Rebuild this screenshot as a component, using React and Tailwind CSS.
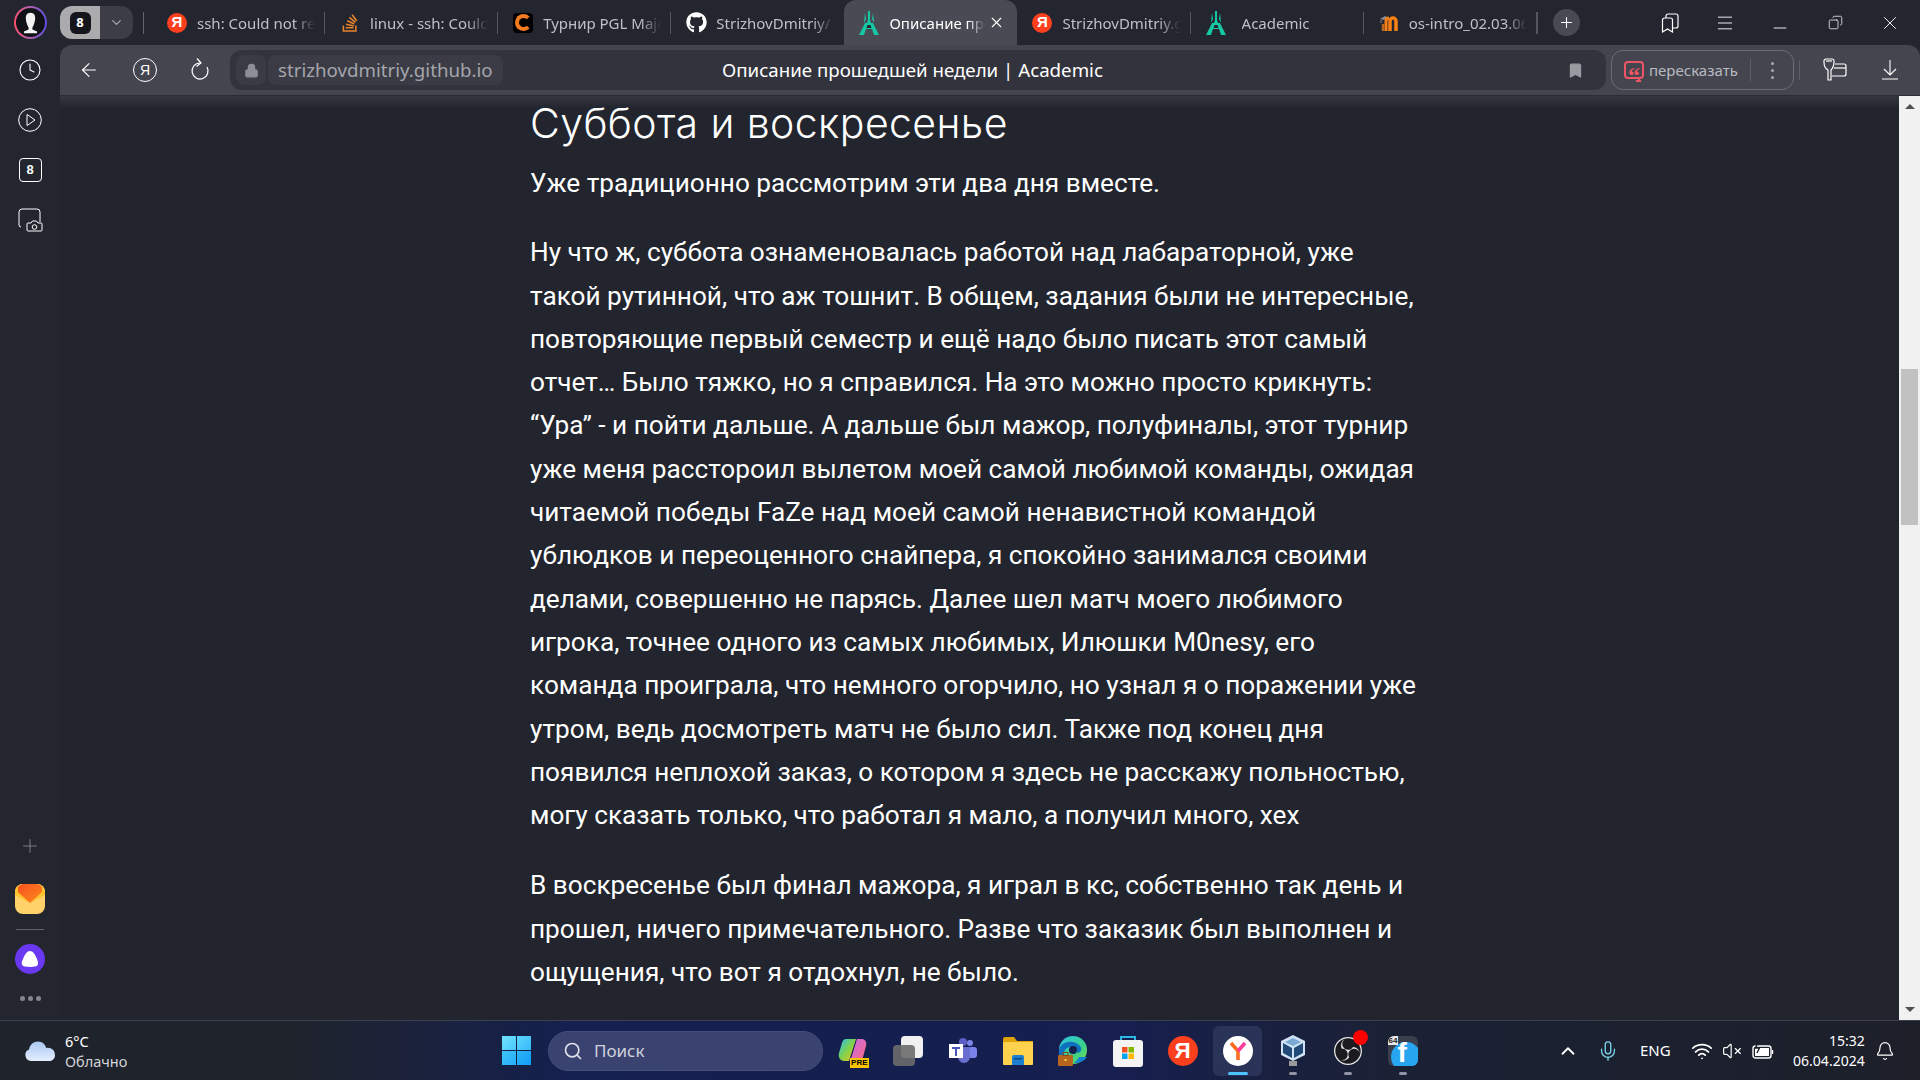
import React from "react";
import {
  ArrowLeft,
  Lock,
  Bookmark,
  X,
  Plus,
  Menu,
  Minus,
  Copy,
  ChevronDown,
  ChevronUp,
  Clock,
  Search,
  Mic,
  Wifi,
  VolumeX,
  Bell,
} from "lucide-react";
import { FaGithub, FaStackOverflow } from "react-icons/fa";
import { SiObsstudio } from "react-icons/si";

const ui = "font-['Noto_Sans',sans-serif]";

const YaLogo = ({ size = 20 }) => (
  <div
    className="flex items-center justify-center rounded-full bg-[#fc3f1d] text-white font-bold font-['Liberation_Sans',sans-serif] shrink-0"
    style={{ width: size, height: size, fontSize: size * 0.75 }}
  >
    Я
  </div>
);

const AcademicLogo = () => (
  <svg width="20" height="24" viewBox="0 0 20 24" className="shrink-0">
    <path
      d="M9 0h2v9l1 3h2l6 12h-5l-2-6H7l-2 6H0l6-12h2l1-3z"
      fill="#14c8a3"
    />
    <path d="M6 2 7 8 5 12zM14 2l-1 6 2 4z" fill="#14c8a3" />
    <path d="M8.5 14h3l1 3h-5z" fill="#23252f" />
  </svg>
);

const CLogo = () => (
  <div className="w-5 h-5 bg-black rounded-sm flex items-center justify-center shrink-0">
    <div className="w-[17px] h-[17px] rounded-full border-[4px] border-[#f57c1f] border-r-transparent" />
  </div>
);

const MoodleLogo = () => (
  <svg width="20" height="18" viewBox="0 0 20 18" fill="none" className="shrink-0">
    <path d="M1 5 6 2l4 2-5 2z" fill="#8a8a8a" />
    <path d="M2 6v3" stroke="#8a8a8a" strokeWidth="1" />
    <path d="M7 17V7a3 3 0 0 1 3-3" stroke="#f98012" strokeWidth="3" />
    <path d="M11 17V7a3 3 0 0 1 6 0v10" stroke="#f98012" strokeWidth="3.500" />
    <path d="M4 17v-7" stroke="#b8691f" strokeWidth="2.500" />
  </svg>
);

const tabs = [
  { icon: <YaLogo />, label: "ssh: Could not resolve" },
  { icon: <FaStackOverflow size={20} className="text-[#e8842c]" />, label: "linux - ssh: Could not" },
  { icon: <CLogo />, label: "Турнир PGL Major" },
  { icon: <FaGithub size={21} className="text-white" />, label: "StrizhovDmitriy/" },
  { icon: <AcademicLogo />, label: "Описание прошедшей", active: true },
  { icon: <YaLogo />, label: "StrizhovDmitriy.github" },
  { icon: <AcademicLogo />, label: "Academic", extra: true },
  { icon: <MoodleLogo />, label: "os-intro_02.03.06" },
];

const Tab = ({ tab, last }) => (
  <div
    className={`relative flex items-center h-[45px] w-[173.1px] shrink-0 ${
      tab.active ? "bg-[#494a54] rounded-t-xl text-white" : "text-[#bfc0c6]"
    }`}
  >
    <div className="w-[45px] flex justify-center shrink-0 pl-[5px]">{tab.icon}</div>
    <span
      className={`text-[15px] pt-[1px] whitespace-nowrap overflow-hidden [mask-image:linear-gradient(to_right,black_82%,transparent)] ${
        tab.active ? "w-[96px]" : "w-[118px]"
      } ${tab.extra ? "ml-[6px]" : ""}`}
    >
      {tab.label}
    </span>
    {tab.active && <X size={17} strokeWidth={1.5} className="ml-[3px] text-white" />}
    {!tab.active && !last && (
      <div className="absolute right-0 top-[12px] h-[22px] w-px bg-[#55565f]" />
    )}
  </div>
);

const Profile = () => (
  <div className="w-[33px] h-[33px] rounded-full p-[2px] bg-gradient-to-r from-[#ff4d6d] to-[#5a4de0] shrink-0">
    <div className="w-full h-full rounded-full bg-[#111218] flex items-center justify-center">
      <svg width="15" height="24" viewBox="0 0 16 24">
        <path d="M8 1c4 0 5 3 5 6 0 4-2 8-3 10v2l5 2v2H1v-2l5-2v-2C5 15 3 11 3 7c0-3 1-6 5-6z" fill="#f2f2f2" />
      </svg>
    </div>
  </div>
);

const TitleBar = () => (
  <header className={`flex items-center h-[45px] bg-[#23252f] ${ui}`}>
    <div className="w-[60px] flex justify-center shrink-0 pl-[1px]">
      <Profile />
    </div>
    <div className="flex h-[33px] w-[73px] rounded-xl overflow-hidden shrink-0">
      <div className="w-[40px] bg-[#ababad] flex items-center justify-center">
        <div className="w-[21px] h-[22px] bg-[#15161b] rounded-md flex items-center justify-center text-white text-[13px] font-bold">
          8
        </div>
      </div>
      <div className="flex-1 bg-[#3c3d47] flex items-center justify-center">
        <ChevronDown size={15} className="text-[#a6a7ad]" />
      </div>
    </div>
    <div className="w-px h-[22px] bg-[#62636b] ml-[10px] mr-[8px]" />
    <div className="flex h-full">
      {tabs.map((tab, i) => (
        <Tab key={i} tab={tab} last={tabs[i + 1]?.active} />
      ))}
    </div>
    <div className="w-px h-[22px] bg-[#55565f]" />
    <div className="ml-[15px] w-[27px] h-[27px] rounded-full bg-[#494a54] flex items-center justify-center shrink-0">
      <Plus size={17} strokeWidth={1.5} className="text-white" />
    </div>
    <div className="ml-[80px] w-[20px] flex justify-center">
      <svg width="18" height="20" viewBox="0 0 18 20" fill="none" stroke="white" strokeWidth="1.2">
        <path d="M1.5 19V7a2 2 0 0 1 2-2h6a2 2 0 0 1 2 2v12l-5-3z" />
        <path d="M5 5V3a2 2 0 0 1 2-2h8a2 2 0 0 1 2 2v10a2 2 0 0 1-2 2h-3.5" />
      </svg>
    </div>
    <Menu size={20} strokeWidth={1.1} className="ml-[35px] text-white" />
    <Minus size={20} strokeWidth={1.1} className="ml-[35px] mt-[11px] text-white" />
    <Copy size={15} strokeWidth={1.2} className="ml-[38px] text-white -scale-x-100" />
    <X size={22} strokeWidth={1} className="ml-[36px] text-white" />
  </header>
);

const KeyIcon = () => (
  <svg width="24" height="24" viewBox="0 0 24 24" fill="none" stroke="white" strokeWidth="1.2">
    <path d="M1 3a2 2 0 0 1 2-2h6a2 2 0 0 1 2 2v1c0 4-2 7-3 8v10H5V12C3 11 1 8 1 4z" />
    <path d="M3 3h6" />
    <path d="M12 6h9a2 2 0 0 1 2 2v8a2 2 0 0 1-2 2h-12" />
    <path d="M11 10h12" />
  </svg>
);

const SummaryIcon = () => (
  <div className="relative w-[20px] h-[18px] rounded-[4px] border-2 border-[#ee5566] flex items-center justify-center shrink-0 overflow-visible">
    <span className="text-[#ee5566] text-[24px] font-bold leading-none font-['Liberation_Serif',serif] mt-[9px]">“</span>
    <div className="absolute -bottom-[5px] left-[9px] w-[5px] h-[5px] border-b-2 border-r-2 border-[#ee5566] skew-x-[30deg]" />
  </div>
);

const ReloadIcon = () => (
  <svg width="20" height="24" viewBox="0 0 20 24" fill="none" stroke="white" strokeWidth="1.2" className="ml-[33px]">
    <path d="M10 5a8 8 0 1 0 7 4" />
    <path d="M7 0.500 11 5 6.500 8.500" />
  </svg>
);

const DownloadIcon = () => (
  <svg width="16" height="20" viewBox="0 0 16 20" fill="none" stroke="white" strokeWidth="1.1" className="ml-[35px]">
    <path d="M8 0v15M2 9l6 6 6-6M0 19h16" />
  </svg>
);

const Toolbar = () => (
  <div className={`h-[50px] flex items-center bg-[#44454f] rounded-tl-xl rounded-tr-xl shrink-0 ${ui}`}>
    <ArrowLeft size={22} strokeWidth={1.2} className="ml-[18px] text-white" />
    <div className="ml-[33px] w-[24px] h-[24px] rounded-full border border-white flex items-center justify-center text-white text-[14px] font-['Liberation_Sans',sans-serif]">
      Я
    </div>
    <ReloadIcon />
    <div className="ml-[20px] w-[1376px] h-[40px] rounded-xl bg-[#32333d] flex items-center px-[6px]">
      <div className="w-[30px] h-[30px] flex items-center justify-center rounded-lg bg-[#3a3b45]">
        <Lock size={15} className="text-[#8e8f96]" fill="#8e8f96" />
      </div>
      <div className="ml-[2px] w-[235px] h-[30px] rounded-lg bg-[#3a3b45] px-[10px] flex items-center text-[18.7px] text-[#a5a6ac] whitespace-nowrap">
        strizhovdmitriy.github.io
      </div>
      <div className="ml-[219px] text-[18.7px] text-white whitespace-nowrap">
        Описание прошедшей недели | Academic
      </div>
      <Bookmark size={17} className="ml-auto mr-[16px] text-[#9a9ba1]" fill="#9a9ba1" />
    </div>
    <div className="ml-[5px] w-[183px] h-[40px] rounded-xl border border-[#6b6c75] flex items-center pl-[12px]">
      <SummaryIcon />
      <span className="ml-[5px] text-[15px] text-[#b9bac0]">пересказать</span>
      <div className="ml-[12px] w-px h-[22px] bg-[#5c5d66]" />
      <div className="ml-[20px] flex flex-col gap-[4px]">
        <span className="w-[3px] h-[3px] rounded-full bg-[#a9aab0]" />
        <span className="w-[3px] h-[3px] rounded-full bg-[#a9aab0]" />
        <span className="w-[3px] h-[3px] rounded-full bg-[#a9aab0]" />
      </div>
    </div>
    <div className="ml-[5px] w-px h-[20px] bg-[#5c5d66]" />
    <div className="ml-[23px]">
      <KeyIcon />
    </div>
    <DownloadIcon />
  </div>
);

const Sidebar = () => (
  <aside className="w-[60px] shrink-0 flex flex-col items-center bg-[#23252f] pt-[13px] pb-[19px]">
    <div className="w-[60px] flex flex-col items-center gap-[26px]">
      <Clock size={24} strokeWidth={1.1} className="text-white" />
      <svg width="24" height="24" viewBox="0 0 24 24" fill="none" stroke="white" strokeWidth="1">
        <circle cx="12" cy="12" r="11.3" />
        <path d="M9 6.5 17 12 9 17.5z" />
      </svg>
      <div className="w-[23px] h-[24px] rounded-[4px] border border-white flex items-center justify-center text-white text-[13px] font-bold font-['Liberation_Sans',sans-serif]">
        8
      </div>
      <svg width="25" height="24" viewBox="0 0 25 24" fill="none" stroke="white" strokeWidth="1">
        <path d="M3 19a2 2 0 0 1-2-2V4a3 3 0 0 1 3-3h15a3 3 0 0 1 3 3v10" />
        <path d="M10 15h3l1.5-2h4l1.5 2h3a1 1 0 0 1 1 1v6a1 1 0 0 1-1 1H10a1 1 0 0 1-1-1v-6a1 1 0 0 1 1-1z" />
        <circle cx="16.5" cy="19" r="2.3" />
      </svg>
    </div>
    <Plus size={22} strokeWidth={0.9} className="mt-auto text-[#8f9097]" />
    <svg width="30" height="30" viewBox="0 0 30 30" className="mt-[27px]">
      <defs>
        <linearGradient id="mailTop" x1="0" y1="0" x2="1" y2="1">
          <stop offset="0" stopColor="#f7521f" />
          <stop offset="1" stopColor="#ff8a1c" />
        </linearGradient>
      </defs>
      <rect width="30" height="30" rx="8" fill="#ffd36a" />
      <path d="M0 8a8 8 0 0 1 8-8h14a8 8 0 0 1 8 8v3L15 19 0 11z" fill="#ffc531" />
      <path d="M3 3a8 8 0 0 1 5-3h14a8 8 0 0 1 5 3v5l-12 11L3 8z" fill="url(#mailTop)" />
    </svg>
    <div className="mt-[15px] w-[28px] h-px bg-[#62636b]" />
    <div className="mt-[14px] w-[30px] h-[30px] rounded-full bg-[#6a38f0] flex items-center justify-center">
      <svg width="18" height="16" viewBox="0 0 18 16">
        <path d="M9 0c3 0 5 3 7 8 2 5 1 7-2 7.500-3 .5-7 .5-10 0C1 15-.5 13 2 8 4 3 6 0 9 0z" fill="white" />
      </svg>
    </div>
    <div className="mt-[22px] flex gap-[3px]">
      <span className="w-[5px] h-[5px] rounded-full bg-[#85868d]" />
      <span className="w-[5px] h-[5px] rounded-full bg-[#85868d]" />
      <span className="w-[5px] h-[5px] rounded-full bg-[#85868d]" />
    </div>
  </aside>
);

const Article = () => (
  <article className="w-[920px] ml-[470px] text-white font-['Roboto',sans-serif] text-[26.2px] leading-[43.3px]">
    <h2 className="text-[41px] leading-[46px] font-light font-['Inter',sans-serif] tracking-[0.4px] mt-[4px] mb-[16px]">
      Суббота и воскресенье
    </h2>
    <p className="mb-[26px]">Уже традиционно рассмотрим эти два дня вместе.</p>
    <p className="mb-[27px]">
      Ну что ж, суббота ознаменовалась работой над лабараторной, уже
      <br />
      такой рутинной, что аж тошнит. В общем, задания были не интересные,
      <br />
      повторяющие первый семестр и ещё надо было писать этот самый
      <br />
      отчет… Было тяжко, но я справился. На это можно просто крикнуть:
      <br />
      “Ура” - и пойти дальше. А дальше был мажор, полуфиналы, этот турнир
      <br />
      уже меня расстороил вылетом моей самой любимой команды, ожидая
      <br />
      читаемой победы FaZe над моей самой ненавистной командой
      <br />
      ублюдков и переоценного снайпера, я спокойно занимался своими
      <br />
      делами, совершенно не парясь. Далее шел матч моего любимого
      <br />
      игрока, точнее одного из самых любимых, Илюшки M0nesy, его
      <br />
      команда проиграла, что немного огорчило, но узнал я о поражении уже
      <br />
      утром, ведь досмотреть матч не было сил. Также под конец дня
      <br />
      появился неплохой заказ, о котором я здесь не расскажу польностью,
      <br />
      могу сказать только, что работал я мало, а получил много, хех
    </p>
    <p>
      В воскресенье был финал мажора, я играл в кс, собственно так день и
      <br />
      прошел, ничего примечательного. Разве что заказик был выполнен и
      <br />
      ощущения, что вот я отдохнул, не было.
    </p>
  </article>
);

const Scrollbar = () => (
  <div className="relative w-[21px] h-full bg-[#f1f1f1] shrink-0 flex flex-col items-center justify-between py-[8px]">
    <div className="w-0 h-0 border-x-[5px] border-x-transparent border-b-[5px] border-b-[#505050]" />
    <div className="absolute left-[2px] top-[273px] w-[17px] h-[156px] bg-[#c1c1c1]" />
    <div className="w-0 h-0 border-x-[5px] border-x-transparent border-t-[5px] border-t-[#505050]" />
  </div>
);

const Copilot = () => (
  <div className="relative w-[30px] h-[30px]">
    <svg width="30" height="30" viewBox="0 0 30 30">
      <defs>
        <linearGradient id="copA" x1="0" y1="0" x2="1" y2="1">
          <stop offset="0" stopColor="#2bc2f3" />
          <stop offset="0.5" stopColor="#7fd24a" />
          <stop offset="1" stopColor="#f7c125" />
        </linearGradient>
        <linearGradient id="copB" x1="0" y1="0" x2="1" y2="1">
          <stop offset="0" stopColor="#c36bf0" />
          <stop offset="1" stopColor="#ff6a7a" />
        </linearGradient>
      </defs>
      <path d="M8 3h10L11 25H6C2 25 0 21 1 17L4 7c1-3 2-4 4-4z" fill="url(#copA)" />
      <path d="M19 3h5c3 0 5 3 4 7l-3 11c-1 3-3 5-6 5h-7z" fill="url(#copB)" />
    </svg>
    <div className="absolute right-[-1px] bottom-[-2px] bg-[#f8c400] text-black text-[8px] leading-[10px] font-bold px-[1px] font-['Liberation_Sans',sans-serif]">
      PRE
    </div>
  </div>
);

const TaskIcon = ({ children, dot, active }) => (
  <div className={`relative w-[49px] h-[50px] mx-[3px] rounded-md flex items-center justify-center ${active ? "bg-[#2a3358]" : ""}`}>
    {children}
    {dot && (
      <div
        className={`absolute bottom-[1px] left-1/2 -translate-x-1/2 h-[3px] rounded-full ${
          active ? "w-[20px] bg-[#4cc2ff]" : "w-[8px] bg-[#8f93a3]"
        }`}
      />
    )}
  </div>
);

const TaskbarIcons = () => (
  <div className="flex items-center ml-[2px]">
    <TaskIcon><Copilot /></TaskIcon>
    <TaskIcon>
      <div className="relative w-[30px] h-[30px]">
        <div className="absolute right-0 top-0 w-[22px] h-[22px] rounded-sm bg-[#f1f1f1]" />
        <div className="absolute left-0 bottom-0 w-[22px] h-[21px] rounded-sm bg-[#6b6b6b]/90" />
      </div>
    </TaskIcon>
    <TaskIcon>
      <svg width="28" height="26" viewBox="0 0 28 26">
        <circle cx="21" cy="5" r="3" fill="#7b83eb" />
        <circle cx="14" cy="4" r="4" fill="#5b5fc7" />
        <rect x="19" y="9" width="9" height="11" rx="3" fill="#7b83eb" />
        <path d="M8 9h13v10a6 6 0 0 1-12 0z" fill="#6a6ed0" />
        <rect x="0" y="6" width="14" height="14" fill="#fff" />
        <path d="M3 9h8v2H8v7H6v-7H3z" fill="#4b53bc" />
      </svg>
    </TaskIcon>
    <TaskIcon>
      <svg width="30" height="28" viewBox="0 0 30 28">
        <path d="M0 2a2 2 0 0 1 2-2h9l3 4h16v6H0z" fill="#e0a40a" />
        <rect y="5" width="30" height="23" rx="1" fill="#ffd24d" />
        <path d="M9 20a2 2 0 0 1 2-2h8a2 2 0 0 1 2 2v8H9z" fill="#1e7fd0" />
        <rect x="11" y="21" width="8" height="1.500" fill="#0c4a84" />
      </svg>
    </TaskIcon>
    <TaskIcon>
      <svg width="30" height="30" viewBox="0 0 30 30">
        <defs>
          <linearGradient id="edgeA" x1="0" y1="0" x2="1" y2="1">
            <stop offset="0" stopColor="#2ec4e6" />
            <stop offset="0.6" stopColor="#39d08a" />
            <stop offset="1" stopColor="#7fe04a" />
          </linearGradient>
        </defs>
        <circle cx="15" cy="14" r="14" fill="url(#edgeA)" />
        <path d="M1 14C3 5 16 3 22 10c3 4 0 7-3 7 2-6-8-9-12-3-2 4-1 9 3 12-6-1-10-6-9-12z" fill="#0f6fc0" />
        <circle cx="15" cy="14" r="4" fill="#16204e" />
        <path d="M16 27c6 0 10-2 13-6l-8 0c-2 3-3 4-5 6z" fill="#1382d0" />
        <rect x="0" y="19" width="15" height="11" rx="1" fill="#b5651d" />
        <rect x="5" y="16.500" width="5" height="3" fill="none" stroke="#8a4a12" />
        <rect x="6.500" y="23" width="2" height="2" fill="#ffd24d" />
      </svg>
    </TaskIcon>
    <TaskIcon>
      <svg width="30" height="32" viewBox="0 0 30 32">
        <path d="M8 6V2h14v4" fill="none" stroke="#2fb6e8" strokeWidth="2" />
        <rect y="5" width="30" height="27" rx="3" fill="#f4f4f4" />
        <rect x="9" y="12" width="5.500" height="5.500" fill="#f25022" />
        <rect x="15.500" y="12" width="5.500" height="5.500" fill="#7fba00" />
        <rect x="9" y="18.500" width="5.500" height="5.500" fill="#00a4ef" />
        <rect x="15.500" y="18.500" width="5.500" height="5.500" fill="#ffb900" />
      </svg>
    </TaskIcon>
    <TaskIcon><YaLogo size={30} /></TaskIcon>
    <TaskIcon dot active>
      <div className="w-[30px] h-[30px] rounded-full bg-white flex items-center justify-center">
        <svg width="20" height="20" viewBox="0 0 20 20" fill="none" strokeWidth="3.500">
          <path d="M3 2 10 10v9" stroke="#ff6a1f" />
          <path d="M17 2 10 10" stroke="#ff3d9a" />
        </svg>
      </div>
    </TaskIcon>
    <TaskIcon dot>
      <svg width="26" height="32" viewBox="0 0 26 32">
        <path d="M13 0 25 6v14l-12 6L1 20V6z" fill="#cfe3f4" />
        <path d="M3 8l9 5v10l-9-5zM14 13l9-5v10l-9 5z" fill="#214a78" />
        <path d="M13 3l8 4-8 4-8-4z" fill="#7aa9d6" />
        <rect x="9" y="26" width="8" height="5" fill="#9a9a9a" />
      </svg>
    </TaskIcon>
    <TaskIcon dot>
      <div className="relative">
        <div className="w-[28px] h-[28px] rounded-full bg-[#1b1b1f] flex items-center justify-center">
          <SiObsstudio size={28} className="text-[#e6e6e6]" />
        </div>
        <div className="absolute -top-[7px] -right-[6px] w-[15px] h-[15px] rounded-full bg-[#ff0000]" />
      </div>
    </TaskIcon>
    <TaskIcon dot>
      <div className="relative w-[30px] h-[30px] rounded-md bg-[#3a3f4e] overflow-hidden">
        <div className="absolute left-[3px] top-[6px] w-[30px] h-[30px] rounded-full bg-[#28a5f0]" />
        <span className="absolute left-[10px] top-[2px] text-white text-[28px] leading-[30px] font-bold font-['Liberation_Sans',sans-serif]">f</span>
        <span className="absolute left-0 top-0 bg-[#e8e8e8] text-[#222] text-[8px] leading-[9px] px-[1px] font-bold font-['Liberation_Sans',sans-serif]">64</span>
      </div>
    </TaskIcon>
  </div>
);

const Taskbar = () => (
  <footer className={`h-[60px] shrink-0 flex items-center border-t border-[#3c3f4d] bg-[linear-gradient(90deg,#1f232b_0%,#1f232b_15%,#14204f_30%,#161f4f_58%,#1b2135_72%,#1d2029_100%)] text-white ${ui}`}>
    <svg width="32" height="22" viewBox="0 0 32 22" className="ml-[24px]">
      <defs>
        <linearGradient id="cloud" x1="0" y1="0" x2="0" y2="1">
          <stop offset="0" stopColor="#a9c7f2" />
          <stop offset="1" stopColor="#e4eeff" />
        </linearGradient>
      </defs>
      <path d="M7 21a6 6 0 0 1-2-11.500C6 3 12 0 17 2c3 1 5 4 5 6 5-1 9 2 9 7 0 4-3 6-6 6z" fill="url(#cloud)" />
    </svg>
    <div className="ml-[9px] text-[14.5px] leading-[20px] w-[90px]">
      <div>6°C</div>
      <div className="text-[#d3d5da]">Облачно</div>
    </div>
    <div className="ml-[347px] grid grid-cols-2 gap-[1px] w-[29px] h-[29px] shrink-0">
      <div className="bg-gradient-to-br from-[#71e2ff] to-[#45c8fb]" />
      <div className="bg-gradient-to-br from-[#5dd5fd] to-[#35bafa]" />
      <div className="bg-gradient-to-br from-[#40c4fa] to-[#23aef8]" />
      <div className="bg-gradient-to-br from-[#2eb6fa] to-[#0f9bf5]" />
    </div>
    <div className="ml-[17px] w-[275px] h-[40px] rounded-full bg-[#3a4270] border border-[#454d7a] flex items-center pl-[14px] shrink-0">
      <Search size={20} strokeWidth={2} className="text-[#dfe1ea]" />
      <span className="ml-[11px] text-[17px] text-[#cfd2dd]">Поиск</span>
    </div>
    <TaskbarIcons />
    <ChevronUp size={22} className="ml-[127px]" />
    <Mic size={22} strokeWidth={1.5} className="ml-[18px] text-[#79cfe6]" />
    <span className="ml-[21px] text-[15px]">ENG</span>
    <Wifi size={22} strokeWidth={2} className="ml-[20px]" />
    <VolumeX size={20} strokeWidth={1.4} className="ml-[9px]" />
    <svg width="22" height="18" viewBox="0 0 22 18" fill="none" stroke="white" strokeWidth="1.4" className="ml-[10px]">
      <rect x="1" y="4" width="18" height="12" rx="2.500" />
      <rect x="3" y="6" width="14" height="8" fill="white" stroke="none" />
      <path d="M20.500 8v4" />
      <path d="M6 0 3.500 6h4L5 11" stroke="#1d2029" />
    </svg>
    <div className="ml-[18px] w-[73px] text-right text-[14px] leading-[20px] whitespace-nowrap flex flex-col items-end">
      <span>15:32</span>
      <span>06.04.2024</span>
    </div>
    <Bell size={20} strokeWidth={1.4} className="ml-[10px]" />
  </footer>
);

export default function App() {
  return (
    <div className="w-[1920px] h-[1080px] flex flex-col overflow-hidden bg-[#23252f]">
      <TitleBar />
      <div className="flex flex-1 min-h-0">
        <Sidebar />
        <main className="flex-1 flex flex-col min-w-0">
          <Toolbar />
          <div className="flex-1 min-h-0 flex bg-[#22252e] border-t border-[#2b2c35] bg-[linear-gradient(180deg,#343640_0px,#22252e_12px)]">
            <div className="flex-1 min-w-0 overflow-hidden">
              <Article />
            </div>
            <Scrollbar />
          </div>
        </main>
      </div>
      <Taskbar />
    </div>
  );
}
